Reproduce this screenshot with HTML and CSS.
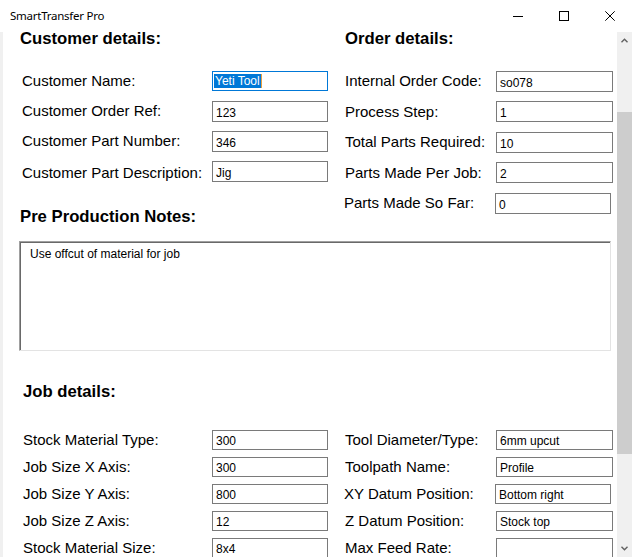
FILE: index.html
```html
<!DOCTYPE html>
<html lang="en">
<head>
<meta charset="utf-8">
<title>SmartTransfer Pro</title>
<link rel="stylesheet" href="styles.css">
</head>
<body>
<div class="window">
  <div class="titlebar">
    <span class="title">SmartTransfer Pro</span>
    <div class="controls">
      <span class="ctrl"><svg width="10" height="10" viewBox="0 0 10 10"><line x1="0" y1="5.5" x2="10" y2="5.5" stroke="#000" stroke-width="1"/></svg></span>
      <span class="ctrl"><svg width="10" height="10" viewBox="0 0 10 10"><rect x="0.5" y="0.5" width="9" height="9" fill="none" stroke="#000" stroke-width="1"/></svg></span>
      <span class="ctrl"><svg width="10" height="10" viewBox="0 0 10 10"><path d="M0.3 0.3 L9.7 9.7 M9.7 0.3 L0.3 9.7" stroke="#000" stroke-width="1"/></svg></span>
    </div>
  </div>
  <div class="main">
    <div class="edge"></div>
    <div class="content">
      <div class="top">
        <div class="col-left">
          <h2 class="heading">Customer details:</h2>
          <div class="rows">
            <div class="row"><span class="label">Customer Name:</span><span class="field focused"><span class="sel">Yeti Tool</span></span></div>
            <div class="row"><span class="label">Customer Order Ref:</span><span class="field">123</span></div>
            <div class="row"><span class="label">Customer Part Number:</span><span class="field">346</span></div>
            <div class="row low"><span class="label">Customer Part Description:</span><span class="field">Jig</span></div>
          </div>
          <h2 class="heading notes-heading">Pre Production Notes:</h2>
        </div>
        <div class="col-right">
          <h2 class="heading">Order details:</h2>
          <div class="rows">
            <div class="row"><span class="label">Internal Order Code:</span><span class="field">so078</span></div>
            <div class="row"><span class="label">Process Step:</span><span class="field">1</span></div>
            <div class="row"><span class="label">Total Parts Required:</span><span class="field">10</span></div>
            <div class="row"><span class="label">Parts Made Per Job:</span><span class="field">2</span></div>
            <div class="row nudge"><span class="label">Parts Made So Far:</span><span class="field">0</span></div>
          </div>
        </div>
      </div>
      <div class="notes">Use offcut of material for job</div>
      <h2 class="heading job-heading">Job details:</h2>
      <div class="job">
        <div class="job-left">
          <div class="row"><span class="label">Stock Material Type:</span><span class="field">300</span></div>
          <div class="row"><span class="label">Job Size X Axis:</span><span class="field">300</span></div>
          <div class="row"><span class="label">Job Size Y Axis:</span><span class="field">800</span></div>
          <div class="row"><span class="label">Job Size Z Axis:</span><span class="field">12</span></div>
          <div class="row"><span class="label">Stock Material Size:</span><span class="field">8x4</span></div>
        </div>
        <div class="job-right">
          <div class="row"><span class="label">Tool Diameter/Type:</span><span class="field">6mm upcut</span></div>
          <div class="row"><span class="label">Toolpath Name:</span><span class="field">Profile</span></div>
          <div class="row nudge"><span class="label">XY Datum Position:</span><span class="field">Bottom right</span></div>
          <div class="row"><span class="label">Z Datum Position:</span><span class="field">Stock top</span></div>
          <div class="row"><span class="label">Max Feed Rate:</span><span class="field"></span></div>
        </div>
      </div>
    </div>
    <div class="scrollbar">
      <div class="arrow"><svg width="7" height="5" viewBox="0 0 7 5"><polyline points="0.5,4.2 3.5,1.2 6.5,4.2" fill="none" stroke="#606060" stroke-width="1.4"/></svg></div>
      <div class="thumb"></div>
      <div class="track-fill"></div>
      <div class="arrow"><svg width="7" height="5" viewBox="0 0 7 5"><polyline points="0.5,0.8 3.5,3.8 6.5,0.8" fill="none" stroke="#606060" stroke-width="1.4"/></svg></div>
    </div>
  </div>
</div>
</body>
</html>
```

FILE: styles.css
```css
* { box-sizing: border-box; }

html, body {
  margin: 0;
  padding: 0;
  background: #ffffff;
}

body {
  width: 633px;
  height: 557px;
  overflow: hidden;
  font-family: "Liberation Sans", Arial, sans-serif;
  color: #000;
}

.window {
  display: flex;
  flex-direction: column;
  width: 633px;
  height: 557px;
}

.titlebar {
  height: 32px;
  flex: 0 0 32px;
  display: flex;
  align-items: center;
  justify-content: space-between;
  background: #fff;
}

.title {
  padding-left: 10px;
  font-family: "Noto Sans", "Open Sans", sans-serif;
  font-size: 11.5px;
  color: #000;
  line-height: 32px;
  letter-spacing: -0.25px;
}

.controls {
  display: flex;
  height: 32px;
}

.ctrl {
  width: 46px;
  height: 32px;
  display: flex;
  align-items: center;
  justify-content: center;
}

.ctrl svg { display: block; }

.main {
  flex: 1;
  display: flex;
  min-height: 0;
}

.edge {
  width: 3px;
  flex: 0 0 3px;
  background: #f0f0f0;
}

.content {
  width: 614px;
  flex: 0 0 614px;
  background: #fff;
}

.heading {
  margin: 0;
  font-size: 16.7px;
  font-weight: bold;
  line-height: 14px;
  height: 14px;
  white-space: nowrap;
}

.top {
  display: grid;
  grid-template-columns: 342px 1fr;
}

.col-left { padding-left: 17px; }

.col-left .rows {
  margin-top: 20px;
  margin-left: 2px;
}

.col-left .row { height: 30px; }
.col-left .label { width: 190px; }
.col-left .field { width: 116px; }
.col-left .row.low .label { padding-top: 3px; }

.notes-heading { margin-top: 24px; }

.col-right .rows {
  margin-top: 20px;
}

.col-right .row { height: 30.5px; }
.col-right .label { width: 151px; }
.col-right .field { width: 117px; }

.row {
  display: flex;
  align-items: center;
}

.row.nudge { margin-left: -1px; }
.row.nudge .field { width: 116px; }

.label {
  flex: 0 0 auto;
  font-size: 15px;
  line-height: 18px;
  white-space: nowrap;
}

.field {
  display: block;
  height: 21px;
  border: 1px solid #7a7a7a;
  background: #fff;
  font-size: 12px;
  line-height: 14px;
  padding: 4px 0 0 3px;
  white-space: nowrap;
  overflow: hidden;
}

.field.focused {
  height: 20px;
  border-color: #0078d7;
  padding: 2px 0 0 1px;
}

.sel {
  display: inline-block;
  background: #0078d7;
  color: #fff;
  padding: 0 1px;
  line-height: 14px;
  border-right: 1px solid #e8a040;
}

.notes {
  margin: 17px 0 0 16px;
  width: 592px;
  height: 110px;
  border-style: solid;
  border-width: 1px;
  border-color: #a0a0a0 #e3e3e3 #e3e3e3 #a0a0a0;
  box-shadow: inset 1px 1px 0 #696969;
  padding: 5px 0 0 10px;
  font-size: 12px;
  line-height: 15px;
}

.job-heading {
  margin-top: 34px;
  padding-left: 20px;
}

.job {
  margin-top: 27px;
  display: grid;
  grid-template-columns: 342px 1fr;
}

.job-left { padding-left: 20px; }
.job-left .label { width: 189px; }
.job-left .field { width: 116px; }

.job-right .label { width: 151px; }
.job-right .field { width: 117px; }

.job .row { height: 27px; }
.job .field { height: 20px; padding-top: 3px; }

.scrollbar {
  width: 15px;
  flex: 0 0 15px;
  margin-right: 1px;
  background: #f0f0f0;
  display: flex;
  flex-direction: column;
}

.arrow {
  height: 17px;
  flex: 0 0 17px;
  display: flex;
  align-items: center;
  justify-content: center;
}

.arrow svg { display: block; }

.thumb {
  margin-top: 63px;
  height: 342px;
  flex: 0 0 342px;
  background: #cdcdcd;
}

.track-fill { flex: 1; }
```
